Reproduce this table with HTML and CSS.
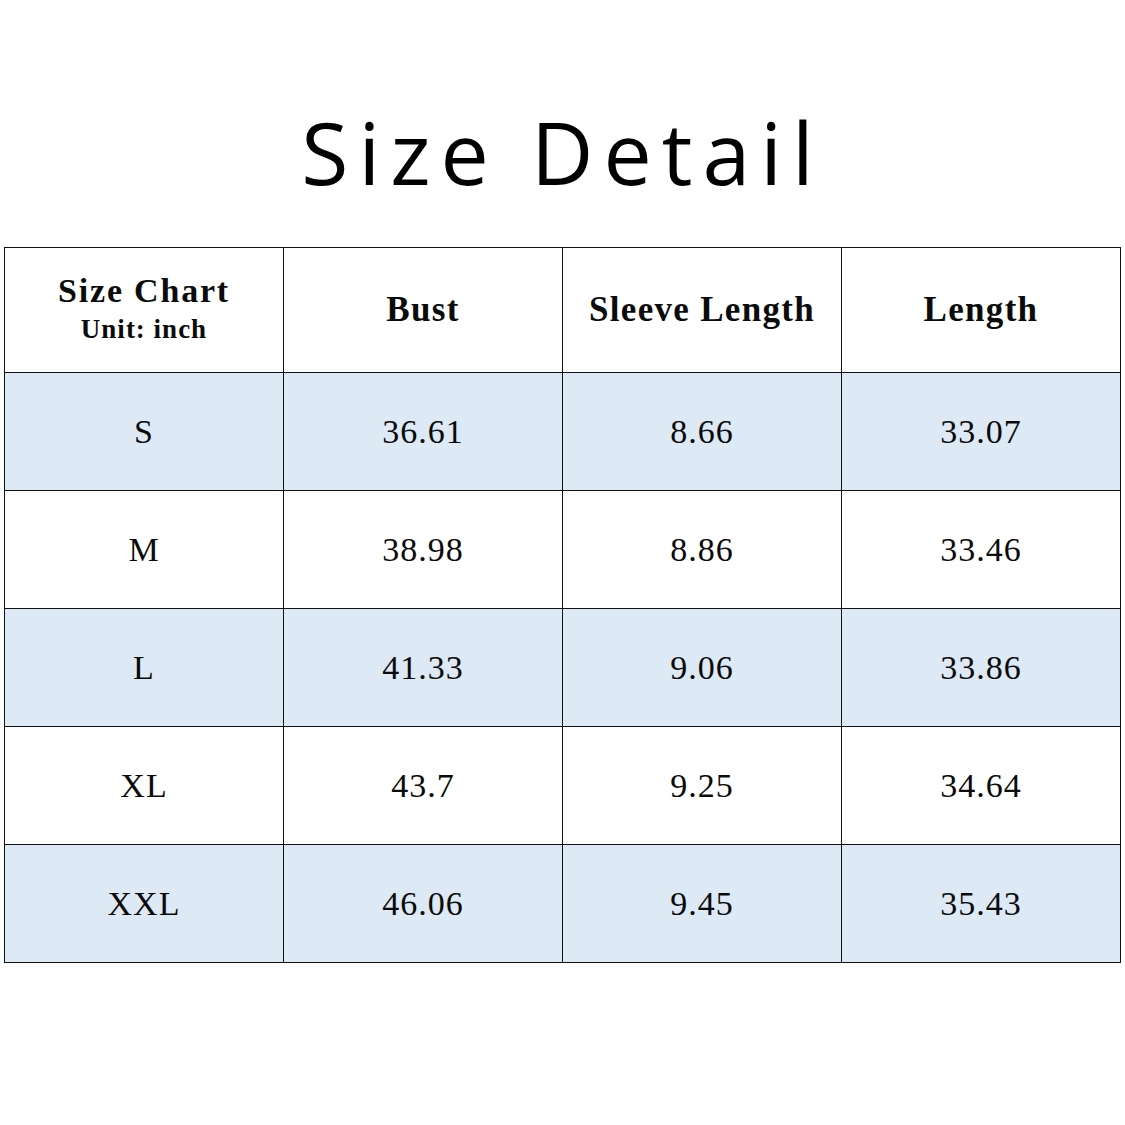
FILE: index.html
```html
<!DOCTYPE html>
<html>
<head>
<meta charset="utf-8">
<link rel="stylesheet" href="styles.css">
</head>
<body>
<div class="page">
  <h1 class="title">Size Detail</h1>
  <table class="chart">
    <thead>
      <tr>
        <th><div class="h-main">Size Chart</div><div class="h-sub">Unit: inch</div></th>
        <th>Bust</th>
        <th>Sleeve Length</th>
        <th>Length</th>
      </tr>
    </thead>
    <tbody>
      <tr class="shade"><td>S</td><td>36.61</td><td>8.66</td><td>33.07</td></tr>
      <tr><td>M</td><td>38.98</td><td>8.86</td><td>33.46</td></tr>
      <tr class="shade"><td>L</td><td>41.33</td><td>9.06</td><td>33.86</td></tr>
      <tr><td>XL</td><td>43.7</td><td>9.25</td><td>34.64</td></tr>
      <tr class="shade"><td>XXL</td><td>46.06</td><td>9.45</td><td>35.43</td></tr>
    </tbody>
  </table>
</div>
</body>
</html>
```

FILE: styles.css
```css
html, body {
  margin: 0;
  padding: 0;
  background: #ffffff;
}
.page {
  width: 1125px;
  height: 1125px;
  box-sizing: border-box;
  padding: 0 4px 0 4px;
}
.title {
  margin: 0;
  height: 247px;
  box-sizing: border-box;
  padding-top: 98px;
  text-align: center;
  font-family: "Open Sans", "DejaVu Sans", sans-serif;
  font-weight: 400;
  font-size: 86px;
  line-height: 108px;
  letter-spacing: 10px;
  color: #000;
}
.chart {
  width: 1117px;
  border-collapse: collapse;
  table-layout: fixed;
  font-family: "Liberation Serif", "Times New Roman", serif;
  color: #0b0b0b;
}
.chart th, .chart td {
  border: 1.5px solid #111;
  text-align: center;
  vertical-align: middle;
  padding: 0;
}
.chart th {
  height: 124px;
  font-weight: 700;
  font-size: 35px;
  letter-spacing: 1.3px;
}
.h-main {
  font-size: 34px;
  line-height: 38px;
  letter-spacing: 1.8px;
}
.h-sub {
  font-size: 27px;
  line-height: 38px;
  letter-spacing: 1px;
}
.chart td {
  height: 117px;
  font-size: 34px;
  font-weight: 400;
  letter-spacing: 1px;
}
.shade td {
  background: #dde9f5;
}
```
